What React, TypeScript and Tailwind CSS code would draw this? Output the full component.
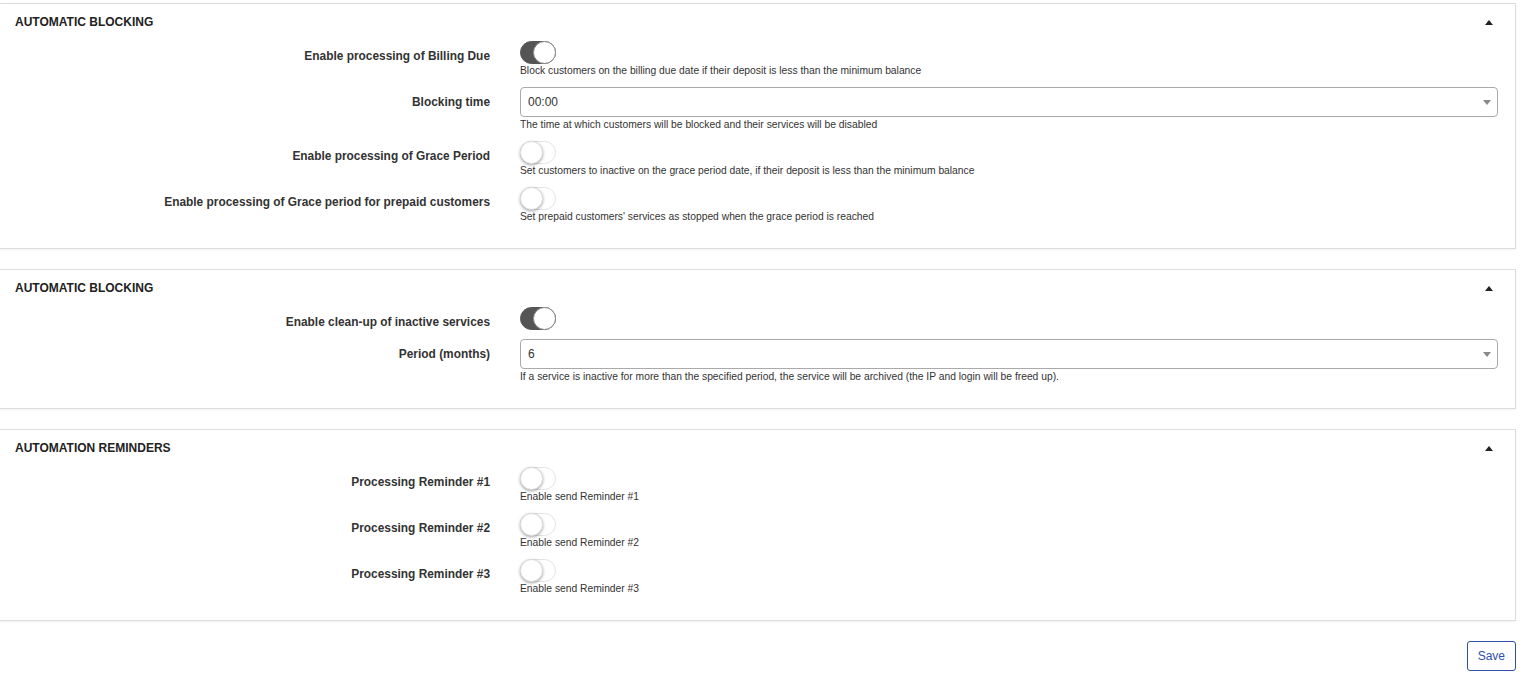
import React, { useState } from 'react';

type ToggleRow = {
  kind: 'toggle';
  label: string;
  help?: string;
  on: boolean;
};

type SelectRow = {
  kind: 'select';
  label: string;
  help?: string;
  value: string;
  options: string[];
};

type Row = ToggleRow | SelectRow;

interface Section {
  title: string;
  rows: Row[];
}

const sections: Section[] = [
  {
    title: 'Automatic blocking',
    rows: [
      {
        kind: 'toggle',
        label: 'Enable processing of Billing Due',
        help: 'Block customers on the billing due date if their deposit is less than the minimum balance',
        on: true,
      },
      {
        kind: 'select',
        label: 'Blocking time',
        help: 'The time at which customers will be blocked and their services will be disabled',
        value: '00:00',
        options: ['00:00', '01:00', '02:00', '03:00', '06:00', '12:00'],
      },
      {
        kind: 'toggle',
        label: 'Enable processing of Grace Period',
        help: 'Set customers to inactive on the grace period date, if their deposit is less than the minimum balance',
        on: false,
      },
      {
        kind: 'toggle',
        label: 'Enable processing of Grace period for prepaid customers',
        help: "Set prepaid customers' services as stopped when the grace period is reached",
        on: false,
      },
    ],
  },
  {
    title: 'Automatic blocking',
    rows: [
      { kind: 'toggle', label: 'Enable clean-up of inactive services', on: true },
      {
        kind: 'select',
        label: 'Period (months)',
        help: 'If a service is inactive for more than the specified period, the service will be archived (the IP and login will be freed up).',
        value: '6',
        options: ['1', '2', '3', '6', '12', '24'],
      },
    ],
  },
  {
    title: 'Automation reminders',
    rows: [
      { kind: 'toggle', label: 'Processing Reminder #1', help: 'Enable send Reminder #1', on: false },
      { kind: 'toggle', label: 'Processing Reminder #2', help: 'Enable send Reminder #2', on: false },
      { kind: 'toggle', label: 'Processing Reminder #3', help: 'Enable send Reminder #3', on: false },
    ],
  },
];

function Switch({ initial }: { initial: boolean }) {
  const [on, setOn] = useState(initial);
  return (
    <button
      type="button"
      onClick={() => setOn(!on)}
      className={`relative block w-[36px] h-[23px] rounded-full border ${
        on ? 'bg-[#555555] border-[#555555]' : 'bg-white border-[#e3e3e3]'
      }`}
    >
      <span
        className={`absolute top-[-1px] h-[23px] w-[23px] rounded-full bg-white border ${
          on
            ? 'right-[-1px] border-[#8a8a8a]'
            : 'left-[-1px] border-[#dcdcdc] shadow-[0_1px_3px_rgba(0,0,0,0.35)]'
        }`}
      />
    </button>
  );
}

function SelectBox({ value, options }: { value: string; options: string[] }) {
  const [val, setVal] = useState(value);
  return (
    <div className="relative">
      <select
        value={val}
        onChange={(e) => setVal(e.target.value)}
        className="block w-full h-[30px] appearance-none rounded-[4px] border border-[#aaaaaa] bg-white pl-[7px] text-[12px] text-[#333333] outline-none"
      >
        {options.map((o) => (
          <option key={o} value={o}>
            {o}
          </option>
        ))}
      </select>
      <span className="pointer-events-none absolute right-[7px] top-[13px] h-0 w-0 border-x-[4px] border-t-[5px] border-x-transparent border-t-[#888888]" />
    </div>
  );
}

function Card({ section }: { section: Section }) {
  const [open, setOpen] = useState(true);
  return (
    <div className="mr-[4px] border-y border-r border-[#dddddd] bg-white pb-[24px] shadow-[0_1px_2px_rgba(0,0,0,0.06)]">
      <div className="flex items-center justify-between pl-[15px] pr-[22px] pt-[10px] pb-[10px]">
        <h3 className="text-[12px] font-bold uppercase leading-[16px] text-[#222222]">
          {section.title}
        </h3>
        <button type="button" onClick={() => setOpen(!open)} className="h-[16px] flex items-center">
          <span className="block h-0 w-0 border-x-[4px] border-b-[5px] border-x-transparent border-b-[#222222]" />
        </button>
      </div>
      {open && (
        <div className="flex flex-col gap-[9px] pt-[1px]">
          {section.rows.map((row, i) => (
            <div key={i} className="flex">
              <label className="w-[490px] shrink-0 pt-[7px] text-right text-[11.9px] font-bold leading-[16px] text-[#333333]">
                {row.label}
              </label>
              <div className="ml-[30px] mr-[17px] flex-1">
                {row.kind === 'toggle' ? (
                  <Switch initial={row.on} />
                ) : (
                  <SelectBox value={row.value} options={row.options} />
                )}
                {row.help && (
                  <p className={`text-[10.3px] leading-[14px] text-[#333333] ${row.kind === 'select' ? 'mt-[1px]' : ''}`}>
                    {row.help}
                  </p>
                )}
              </div>
            </div>
          ))}
        </div>
      )}
    </div>
  );
}

export default function App() {
  return (
    <div className="min-h-screen bg-white pt-[3px] font-['Liberation_Sans',Arial,sans-serif]">
      <div className="flex flex-col gap-[20px]">
        {sections.map((s, i) => (
          <Card key={i} section={s} />
        ))}
      </div>
      <div className="mr-[4px] mt-[20px] flex justify-end">
        <button
          type="button"
          className="h-[30px] rounded-[3px] border border-[#2f4fa8] bg-white px-[10px] text-[12px] text-[#2f4fa8]"
        >
          Save
        </button>
      </div>
    </div>
  );
}
